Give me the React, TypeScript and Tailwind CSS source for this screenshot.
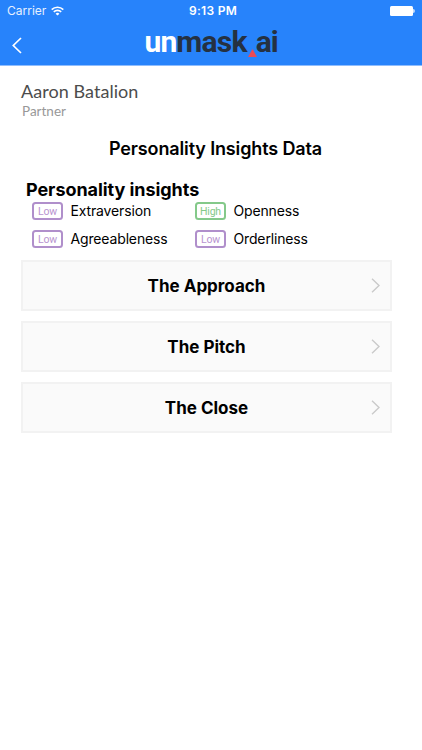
import { useState } from "react";

interface Trait {
  name: string;
  level: "Low" | "High";
}

const TRAITS: Trait[] = [
  { name: "Extraversion", level: "Low" },
  { name: "Openness", level: "High" },
  { name: "Agreeableness", level: "Low" },
  { name: "Orderliness", level: "Low" },
];

const SECTIONS = ["The Approach", "The Pitch", "The Close"];

function StatusBar() {
  return (
    <div className="grid grid-cols-3 items-center h-[22px] px-[7px] text-[12px] leading-none">
      <div className="flex items-center gap-[5px]">
        <span className="text-[#e6f0ff]">Carrier</span>
        <svg width="13" height="10" viewBox="0 0 13 10" fill="none" stroke="white" strokeWidth="1.6">
          <path d="M0.7 3.6a8.2 8.2 0 0 1 11.6 0" />
          <path d="M2.8 5.9a5.2 5.2 0 0 1 7.4 0" />
          <path d="M6.5 9.6L4.6 7.7a2.7 2.7 0 0 1 3.8 0z" fill="white" stroke="none" />
        </svg>
      </div>
      <span className="text-center font-semibold tracking-[0.3px] whitespace-nowrap pl-1">9:13 PM</span>
      <div className="flex items-center justify-end">
        <div className="w-[23px] h-[10px] rounded-[1.5px] bg-white" />
        <div className="w-[2px] h-[4px] rounded-r-full bg-white/70" />
      </div>
    </div>
  );
}

function Logo() {
  return (
    <div className="flex items-baseline font-['Roboto',sans-serif] font-bold text-[30px] leading-[34px]">
      <span className="tracking-[-0.9px] text-white">un</span>
      <span className="tracking-[-0.75px] text-[#253141]">mask</span>
      <svg className="relative top-[5px] ml-px" width="9" height="8" viewBox="0 0 9 8">
        <path d="M4.5 0L9 8H0z" fill="#ee4b55" />
      </svg>
      <span className="-ml-px tracking-[-1.2px] text-[#253141]">ai</span>
    </div>
  );
}

function TraitRow({ trait }: { trait: Trait }) {
  const color =
    trait.level === "High" ? "border-[#84c98a] text-[#84c98a]" : "border-[#b08fcb] text-[#b894d0]";

  return (
    <div className="flex items-center h-[18px]">
      <span
        className={`flex items-center justify-center w-[31px] h-[18px] border-2 rounded-[3.5px] pt-[2px] font-['Roboto',sans-serif] text-[10.5px] tracking-[-0.2px] leading-none ${color}`}
      >
        {trait.level}
      </span>
      <span className="ml-[7.5px] text-[14px] tracking-[-0.15px] leading-none whitespace-nowrap">{trait.name}</span>
    </div>
  );
}

export default function App() {
  const [active, setActive] = useState<string | null>(null);

  return (
    <div className="w-[422px] h-[750px] bg-white text-black font-['Inter',sans-serif] overflow-hidden">
      <header className="h-[66px] bg-[#2783fb] border-b border-[#8fbdfd] text-white">
        <StatusBar />
        <div className="flex items-center h-[43px]">
          <button className="ml-[12px] mt-[4px]" aria-label="Back">
            <svg width="10" height="17" viewBox="0 0 10 17" fill="none" stroke="white" strokeWidth="1.7">
              <path d="M9 1L1.3 8.5L9 16" />
            </svg>
          </button>
          <div className="ml-[122.5px] -mt-[3px]">
            <Logo />
          </div>
        </div>
      </header>

      <main className="px-[21px]">
        <div className="pt-[15px] font-['Lato',sans-serif]">
          <h1 className="text-[18px] leading-[20px] text-[#4c4c4c] tracking-[0.05px]">Aaron Batalion</h1>
          <p className="pl-px text-[13.5px] leading-[21px] text-[#989898]">Partner</p>
        </div>

        <h2 className="mt-[15px] ml-[9px] text-center text-[18px] leading-[24px] font-semibold tracking-[-0.13px]">
          Personality Insights Data
        </h2>

        <section>
          <h3 className="mt-[17px] ml-[5px] text-[18px] leading-[24px] font-bold tracking-[-0.06px]">
            Personality insights
          </h3>
          <div className="grid grid-cols-[163px_163px] gap-y-[10px] ml-[11px]">
            {TRAITS.map((trait) => (
              <TraitRow key={trait.name} trait={trait} />
            ))}
          </div>
        </section>

        <div className="flex flex-col gap-[10px] mt-[12px] w-[371px]">
          {SECTIONS.map((section) => (
            <button
              key={section}
              onClick={() => setActive(active === section ? null : section)}
              className="grid grid-cols-[1fr_auto_1fr] items-center h-[51px] bg-[#fafafa] border-2 border-[#f2f2f2] px-[10px]"
            >
              <span />
              <span className="pt-[2px] text-[17px] font-bold">{section}</span>
              <svg className="justify-self-end" width="9" height="15" viewBox="0 0 9 15" fill="none" stroke="#cacaca" strokeWidth="1.4">
                <path d="M1 0.8L8 7.5L1 14.2" />
              </svg>
            </button>
          ))}
        </div>
      </main>
    </div>
  );
}
